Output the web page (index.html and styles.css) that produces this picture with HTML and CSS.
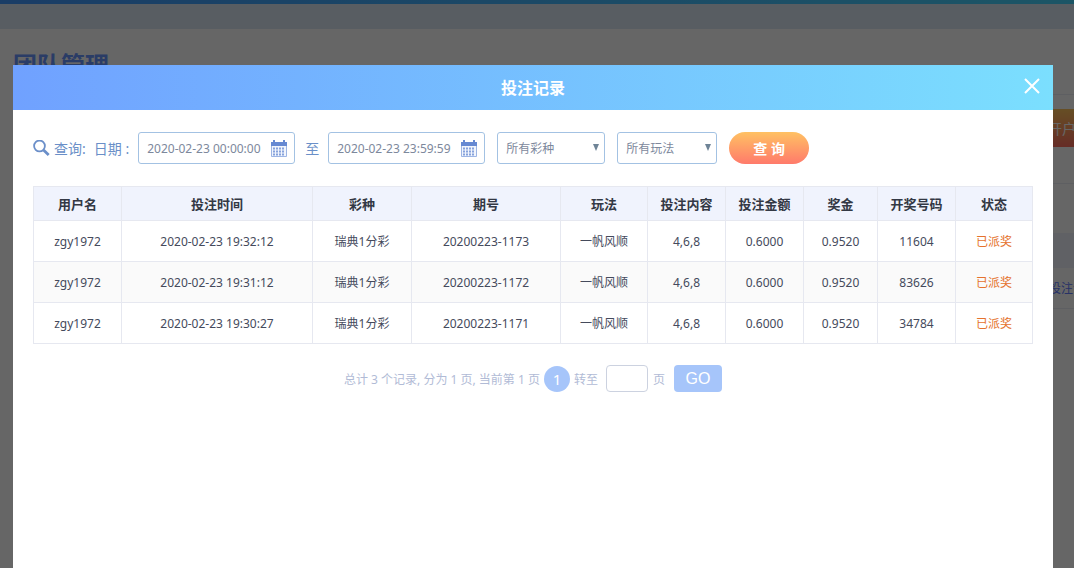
FILE: index.html
```html
<!DOCTYPE html>
<html lang="zh-CN">
<head>
    <meta charset="UTF-8">
    <meta name="viewport" content="width=device-width, initial-scale=1.0">
    <title>投注记录</title>
    <link rel="stylesheet" href="styles.css">
</head>
<body>
    <!-- Team page behind the dialog -->
    <div class="page">
        <div class="topbar"></div>
        <div class="subbar"></div>
        <main class="content">
            <h1>团队管理</h1>
            <div class="toolbar">
                <button type="button" class="open-account">开户</button>
            </div>
            <div class="list-head"></div>
            <div class="list-row"><a href="#">投注记录</a></div>
        </main>
    </div>

    <div class="overlay">
        <div class="dialog" role="dialog" aria-labelledby="dialogTitle">
            <div class="dialog-header">
                <h2 id="dialogTitle">投注记录</h2>
                <button type="button" class="close" aria-label="关闭">
                    <svg width="16" height="16" viewBox="0 0 16 16"><path d="M1 1l14 14M15 1L1 15" stroke="#fff" stroke-width="2" fill="none"/></svg>
                </button>
            </div>
            <div class="dialog-body">
                <form class="search">
                    <svg class="search-icon" width="17" height="17" viewBox="0 0 17 17"><circle cx="6.5" cy="6" r="5.4" fill="none" stroke="#6b8fc9" stroke-width="1.8"/><path d="M10.5 10l5.2 5" stroke="#6b8fc9" stroke-width="2.8"/></svg>
                    <span class="search-title">查询:</span>
                    <label for="startTime">日期 :</label>
                    <span class="date-field">
                        <input type="text" id="startTime" value="2020-02-23 00:00:00">
                        <svg width="16" height="17" viewBox="0 0 16 17"><use href="#calendar"/></svg>
                    </span>
                    <label for="endTime" class="to">至</label>
                    <span class="date-field">
                        <input type="text" id="endTime" value="2020-02-23 23:59:59">
                        <svg width="16" height="17" viewBox="0 0 16 17"><g id="calendar"><path d="M0 2h2V0h2v2h8V0h2v2h2v4H0z" fill="#6689d2"/><path d="M.5 6v10.5h15V6" fill="#f1f5fd" stroke="#9db5e4"/><path d="M2 8.5h12M2 11.5h12M2 14.5h12" stroke="#86a2dc" stroke-width="2" stroke-dasharray="2 1"/></g></svg>
                    </span>
                    <span class="select-field lottery">
                        <select aria-label="彩种"><option>所有彩种</option></select>
                    </span>
                    <span class="select-field play">
                        <select aria-label="玩法"><option>所有玩法</option></select>
                    </span>
                    <button type="submit" class="query">查 询</button>
                </form>

                <table class="records">
                    <colgroup>
                        <col class="c-user"><col class="c-time"><col class="c-lottery"><col class="c-issue"><col class="c-play">
                        <col class="c-num"><col class="c-num"><col class="c-prize"><col class="c-num"><col class="c-state">
                    </colgroup>
                    <thead>
                        <tr>
                            <th>用户名</th><th>投注时间</th><th>彩种</th><th>期号</th><th>玩法</th>
                            <th>投注内容</th><th>投注金额</th><th>奖金</th><th>开奖号码</th><th>状态</th>
                        </tr>
                    </thead>
                    <tbody>
                        <tr>
                            <td>zgy1972</td><td>2020-02-23 19:32:12</td><td>瑞典1分彩</td><td>20200223-1173</td><td>一帆风顺</td>
                            <td>4,6,8</td><td>0.6000</td><td>0.9520</td><td>11604</td><td class="paid">已派奖</td>
                        </tr>
                        <tr>
                            <td>zgy1972</td><td>2020-02-23 19:31:12</td><td>瑞典1分彩</td><td>20200223-1172</td><td>一帆风顺</td>
                            <td>4,6,8</td><td>0.6000</td><td>0.9520</td><td>83626</td><td class="paid">已派奖</td>
                        </tr>
                        <tr>
                            <td>zgy1972</td><td>2020-02-23 19:30:27</td><td>瑞典1分彩</td><td>20200223-1171</td><td>一帆风顺</td>
                            <td>4,6,8</td><td>0.6000</td><td>0.9520</td><td>34784</td><td class="paid">已派奖</td>
                        </tr>
                    </tbody>
                </table>

                <form class="pager">
                    <span>总计 3 个记录, 分为 1 页, 当前第 1 页</span>
                    <a href="#" class="current">1</a>
                    <label for="pageNo">转至</label>
                    <input type="text" id="pageNo">
                    <span class="unit">页</span>
                    <button type="submit" class="go">GO</button>
                </form>
            </div>
        </div>
    </div>
</body>
</html>
```

FILE: styles.css
```css
* {
    box-sizing: border-box;
}

body {
    margin: 0;
    height: 100vh;
    overflow: hidden;
    background-color: #fff;
    font-family: "Noto Sans", "Noto Sans CJK SC", sans-serif;
    font-size: 12px;
    color: #454a5c;
}

button,
input,
select {
    font-family: inherit;
    margin: 0;
}

/* page behind */
.page {
    width: calc(100% + 40px);
}

.topbar {
    height: 4px;
    background: linear-gradient(to right, #4198ff, #48d8ff);
}

.subbar {
    height: 25px;
    background-color: #dde8f5;
}

.content {
    padding-left: 13px;
}

h1 {
    margin: 0;
    padding-top: 18px;
    height: 65px;
    font-size: 24px;
    line-height: 36px;
    color: #6a96ff;
}

.toolbar {
    display: flex;
    justify-content: flex-end;
    height: 90px;
    padding-top: 14px;
    border-top: 1px solid #eceef4;
    border-bottom: 1px solid #eceef4;
}

.open-account {
    width: 104px;
    height: 38px;
    padding: 0;
    border: 0;
    background: linear-gradient(#ffc45c, #ff6f60);
    color: #fff;
    font-size: 14px;
}

.list-head {
    margin-top: 49px;
    height: 35px;
    background-color: #eff2fc;
}

.list-row {
    height: 41px;
    padding-right: 17px;
    border-bottom: 1px solid #eceef4;
    line-height: 42px;
    text-align: right;
}

.list-row a {
    color: #627dff;
    text-decoration: none;
}

/* dialog */
.overlay {
    position: fixed;
    inset: 0;
    display: flex;
    padding: 65px 21px 0 13px;
    background-color: rgba(0, 0, 0, 0.6);
}

.dialog {
    flex: 1;
    min-width: 0;
    background-color: #fff;
}

.dialog-header {
    display: grid;
    grid-template-columns: 1fr auto 1fr;
    align-items: center;
    height: 45px;
    padding: 0 13px 2px;
    background: linear-gradient(to right, #70a1ff, #7bdffe);
}

.dialog-header h2 {
    grid-column: 2;
    margin: 0;
    font-size: 16px;
    color: #fff;
}

.close {
    justify-self: end;
    display: flex;
    padding: 0 0 2px;
    border: 0;
    background: none;
    cursor: pointer;
}

.dialog-body {
    padding: 22px 20px;
}

.search {
    display: flex;
    align-items: center;
    height: 32px;
    margin-bottom: 22px;
    font-size: 14px;
    color: #6a8fc8;
}

.search-title {
    margin: 0 8px 0 4px;
}

.date-field {
    display: flex;
    align-items: center;
    width: 157px;
    height: 32px;
    margin-left: 9px;
    padding: 0 7px 0 8px;
    border: 1px solid #a3c2e3;
    border-radius: 3px;
}

.date-field input {
    flex: 1;
    min-width: 0;
    padding: 0;
    border: 0;
    outline: 0;
    background: none;
    font-size: 12px;
    color: #7d889c;
}

.to {
    margin-left: 10px;
}

.select-field {
    position: relative;
    height: 32px;
    margin-left: 12px;
}

.select-field::after {
    content: "";
    position: absolute;
    top: 12px;
    right: 6px;
    border: 3px solid transparent;
    border-top: 7px solid #6f8497;
    border-bottom: 0;
    pointer-events: none;
}

.lottery {
    width: 108px;
}

.play {
    width: 100px;
}

.select-field select {
    appearance: none;
    width: 100%;
    height: 100%;
    padding: 0 8px;
    border: 1px solid #a3c2e3;
    border-radius: 3px;
    background-color: #fff;
    font-size: 12px;
    color: #7d889c;
}

.query {
    width: 80px;
    height: 32px;
    margin-left: 12px;
    padding: 0;
    border: 0;
    border-radius: 16px;
    background: linear-gradient(#ffc163, #ff7a6b);
    font-size: 14px;
    font-weight: bold;
    color: #fff;
    cursor: pointer;
}

.records {
    width: 100%;
    table-layout: fixed;
    border-collapse: collapse;
    text-align: center;
}

.records th,
.records td {
    height: 41px;
    padding: 0;
    border: 1px solid #e6e8f0;
}

.records th {
    height: 34px;
    background-color: #f0f3fd;
    font-size: 13px;
    color: #333844;
}

.records tbody tr:nth-child(even) {
    background-color: #fafafa;
}

.records .paid {
    color: #e5722d;
}

.c-user { width: 88px; }
.c-time { width: 191px; }
.c-lottery { width: 99px; }
.c-issue { width: 149px; }
.c-play { width: 87px; }
.c-num { width: 78px; }
.c-prize { width: 74px; }
.c-state { width: 77px; }

.pager {
    display: flex;
    justify-content: center;
    align-items: center;
    margin-top: 21px;
    color: #b1bbd6;
}

.current {
    width: 26px;
    margin: 0 4px;
    border-radius: 50%;
    background-color: #a6c5fa;
    font-size: 15px;
    line-height: 26px;
    text-align: center;
    text-decoration: none;
    color: #fff;
}

.pager input {
    width: 42px;
    height: 27px;
    margin: 0 5px 0 8px;
    border: 1px solid #ccd2e0;
    border-radius: 4px;
}

.go {
    width: 48px;
    height: 27px;
    margin-left: 9px;
    padding: 0;
    border: 0;
    border-radius: 4px;
    background-color: #a6c5fa;
    font-family: "Liberation Sans", Arial, sans-serif;
    font-size: 16px;
    color: #fff;
    cursor: pointer;
}
```
